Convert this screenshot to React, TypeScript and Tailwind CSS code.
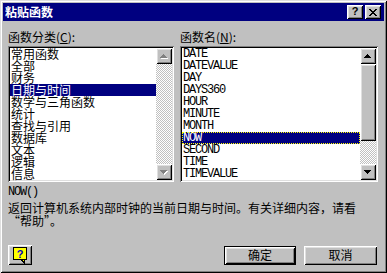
import React from 'react';

const frame = 'shadow-[inset_1px_1px_#dfdfdf,inset_-1px_-1px_#000,inset_2px_2px_#fff,inset_-2px_-2px_#808080]';
const raised = 'shadow-[inset_1px_1px_#fff,inset_-1px_-1px_#000,inset_2px_2px_#dfdfdf,inset_-2px_-2px_#808080]';
const sunken = 'shadow-[inset_1px_1px_#808080,inset_-1px_-1px_#fff,inset_2px_2px_#000,inset_-2px_-2px_#dfdfdf]';
const dither = 'bg-[image:repeating-conic-gradient(#fff_0_25%,#c0c0c0_0_50%)] bg-[length:2px_2px]';
const cjk = "font-['Noto_Sans_CJK_SC',sans-serif]";
const mono = "font-['Liberation_Mono','Noto_Sans_CJK_SC',monospace]";

const categories = ['常用函数', '全部', '财务', '日期与时间', '数学与三角函数', '统计', '查找与引用', '数据库', '文本', '逻辑', '信息'];
const functions = ['DATE', 'DATEVALUE', 'DAY', 'DAYS360', 'HOUR', 'MINUTE', 'MONTH', 'NOW', 'SECOND', 'TIME', 'TIMEVALUE'];

function Arrow({ dir, disabled }: { dir: 'up' | 'down'; disabled?: boolean }) {
  const rows = dir === 'up' ? [[3, 1], [2, 3], [1, 5], [0, 7]] : [[0, 7], [1, 5], [2, 3], [3, 1]];
  return (
    <svg width="8" height="5" shapeRendering="crispEdges">
      {disabled && rows.map(([x, w], i) => <rect key={'s' + i} x={x + 1} y={i + 1} width={w} height={1} fill="#fff" />)}
      {rows.map(([x, w], i) => (
        <rect key={i} x={x} y={i} width={w} height={1} fill={disabled ? '#808080' : '#000'} />
      ))}
    </svg>
  );
}

function ScrollButton({ dir, disabled }: { dir: 'up' | 'down'; disabled?: boolean }) {
  return (
    <div className={`w-[16px] h-[16px] bg-[#c0c0c0] flex items-center justify-center shrink-0 ${raised}`}>
      <Arrow dir={dir} disabled={disabled} />
    </div>
  );
}

function HelpBubble() {
  return (
    <svg width="16" height="17" shapeRendering="crispEdges">
      <rect x="1.5" y="0.5" width="13" height="12" fill="#ffff00" stroke="#000" />
      <path d="M9 12.5 L12.5 16 L12.5 12.5" fill="#ffff00" stroke="#000" />
      <text x="8" y="10.5" textAnchor="middle" fontSize="11" fontWeight="bold" fill="#0000c0" fontFamily="Liberation Sans, sans-serif">?</text>
    </svg>
  );
}

export default function App() {
  return (
    <div className={`w-[387px] h-[273px] bg-[#c0c0c0] p-[3px] flex flex-col text-[12px] leading-[12px] text-black ${cjk} ${frame}`}>
      <div className="h-[18px] bg-[#000080] flex items-center justify-between pl-[2px] pr-[3px] shrink-0">
        <span className="text-white font-bold text-[12px] leading-[12px]">粘贴函数</span>
        <div className="flex gap-[2px]">
          <div className={`w-[16px] h-[14px] bg-[#c0c0c0] flex items-center justify-center ${raised}`}>
            <span className="font-['Liberation_Sans',sans-serif] font-bold text-[11px] leading-[11px] mt-[-1px]">?</span>
          </div>
          <div className={`w-[16px] h-[14px] bg-[#c0c0c0] flex items-center justify-center ${raised}`}>
            <svg width="8" height="7" shapeRendering="crispEdges">
              <path d="M0 0h2v1h1v1h2V1h1V0h2v1H7v1H6v1H5v1h1v1h1v1h1v1H6V6H5V5H3v1H2v1H0V6h1V5h1V4h1V3H2V2H1V1H0z" fill="#000" />
            </svg>
          </div>
        </div>
      </div>

      <div className="flex-1 pl-[5px] pr-[6px] pt-[10px] flex flex-col">
        <div className="flex gap-[6px]">
          <div className="w-[166px]">
            <div className="h-[15px]">
              函数分类(<span className="underline">C</span>):
            </div>
            <div className={`h-[136px] bg-white p-[2px] flex ${sunken}`}>
              <div className="flex-1">
                {categories.map((c) => (
                  <div
                    key={c}
                    className={`h-[12px] leading-[12px] pl-[1px] whitespace-nowrap ${c === '日期与时间' ? 'bg-[#000080] text-white' : ''}`}
                  >
                    {c}
                  </div>
                ))}
              </div>
              <div className="w-[16px] flex flex-col">
                <ScrollButton dir="up" disabled />
                <div className={`flex-1 ${dither}`} />
                <ScrollButton dir="down" disabled />
              </div>
            </div>
          </div>

          <div className="w-[198px]">
            <div className="h-[15px]">
              函数名(<span className="underline">N</span>):
            </div>
            <div className={`h-[136px] bg-white p-[2px] flex ${sunken}`}>
              <div className={`flex-1 ${mono}`}>
                {functions.map((f) => (
                  <div
                    key={f}
                    className={`h-[12px] leading-[12px] pl-[1px] text-[12px] tracking-[-1.2px] whitespace-nowrap ${
                      f === 'NOW' ? 'bg-[#000080] text-white outline-1 outline-dotted outline-[#ffff00] -outline-offset-1' : ''
                    }`}
                  >
                    {f}
                  </div>
                ))}
              </div>
              <div className="w-[16px] flex flex-col">
                <ScrollButton dir="up" />
                <div className={`h-[77px] bg-[#c0c0c0] shrink-0 ${raised}`} />
                <div className={`flex-1 ${dither}`} />
                <ScrollButton dir="down" />
              </div>
            </div>
          </div>
        </div>

        <div className={`mt-[4px] h-[12px] text-[12px] tracking-[-1.2px] ${mono}`}>NOW()</div>
        <div className="mt-[3px] leading-[13px]">
          <div>返回计算机系统内部时钟的当前日期与时间。有关详细内容，请看</div>
          <div>“帮助”。</div>
        </div>

        <div className="mt-[18px] flex items-center">
          <div className={`w-[24px] h-[20px] bg-[#c0c0c0] flex items-center justify-center ${raised}`}>
            <HelpBubble />
          </div>
          <div className="ml-auto flex gap-[8px] mr-[1px]">
            <div className="w-[72px] h-[19px] border border-black">
              <div className={`w-full h-full flex items-center justify-center ${raised}`}>确定</div>
            </div>
            <div className={`w-[73px] h-[19px] flex items-center justify-center ${raised}`}>取消</div>
          </div>
        </div>
      </div>
    </div>
  );
}
